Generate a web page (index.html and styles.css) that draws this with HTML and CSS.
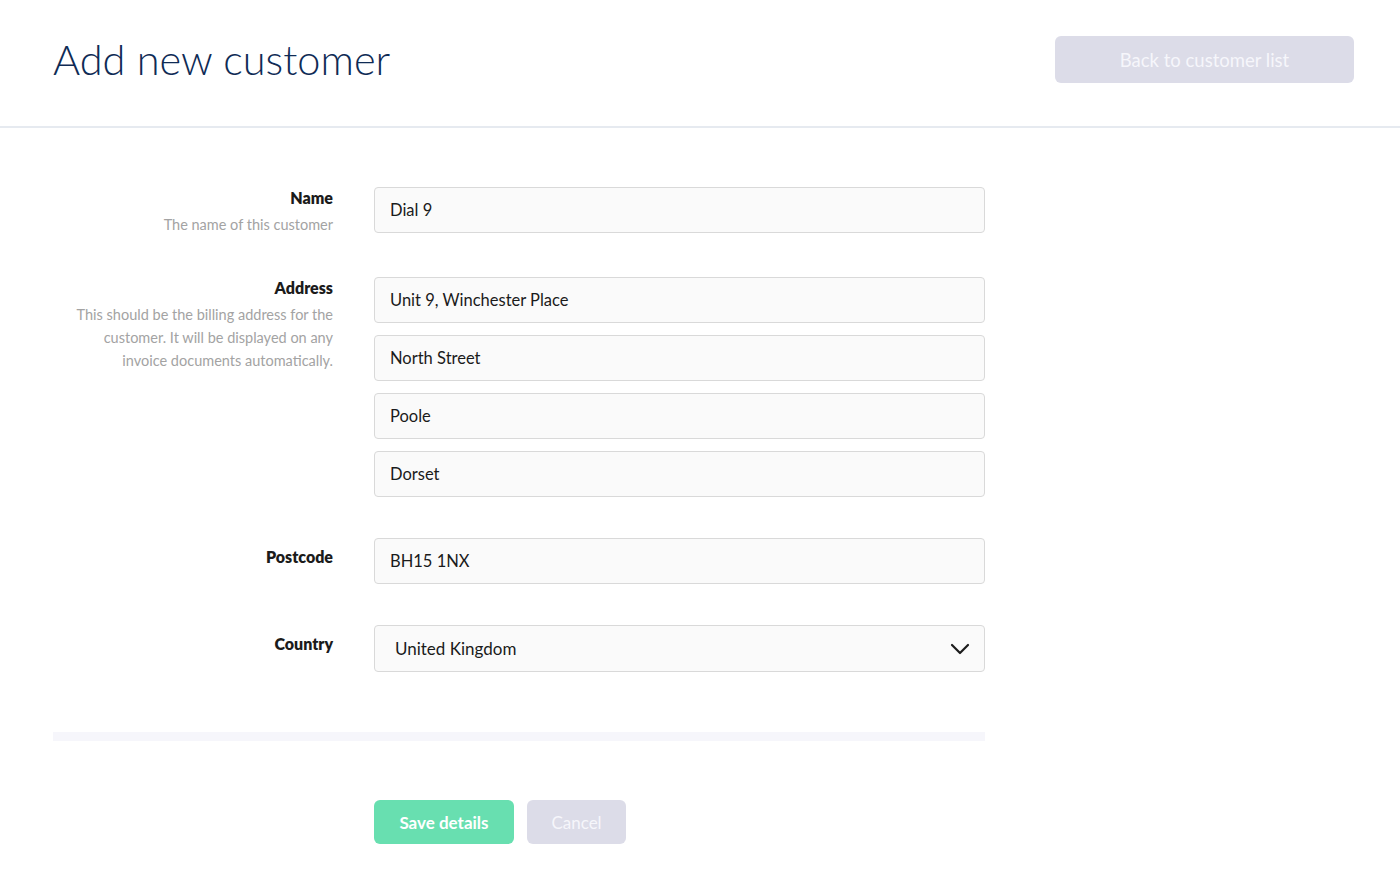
FILE: index.html
```html
<!DOCTYPE html>
<html lang="en">
<head>
<meta charset="utf-8">
<title>Add new customer</title>
<link rel="stylesheet" href="styles.css">
</head>
<body>
<header class="page-header">
  <h1 class="page-title">Add new customer</h1>
  <a class="btn btn-muted btn-back" href="#">Back to customer list</a>
</header>
<main class="content">
  <form class="form">
    <div class="row">
      <div class="label-col">
        <label class="label">Name</label>
        <p class="help">The name of this customer</p>
      </div>
      <div class="field-col">
        <input class="input" type="text" value="Dial 9">
      </div>
    </div>
    <div class="row">
      <div class="label-col">
        <label class="label">Address</label>
        <p class="help">This should be the billing address for the customer. It will be displayed on any invoice documents automatically.</p>
      </div>
      <div class="field-col">
        <input class="input" type="text" value="Unit 9, Winchester Place">
        <input class="input" type="text" value="North Street">
        <input class="input" type="text" value="Poole">
        <input class="input" type="text" value="Dorset">
      </div>
    </div>
    <div class="row">
      <div class="label-col label-col-solo">
        <label class="label">Postcode</label>
      </div>
      <div class="field-col">
        <input class="input" type="text" value="BH15 1NX">
      </div>
    </div>
    <div class="row">
      <div class="label-col label-col-solo">
        <label class="label">Country</label>
      </div>
      <div class="field-col">
        <div class="select">
          <span class="select-value">United Kingdom</span>
          <svg class="chevron" width="20" height="12" viewBox="0 0 20 12"><path d="M2 2 L10 10 L18 2" fill="none" stroke="#1b1b1b" stroke-width="2.2" stroke-linecap="round" stroke-linejoin="round"/></svg>
        </div>
      </div>
    </div>
    <div class="divider"></div>
    <div class="actions">
      <button class="btn btn-primary" type="button">Save details</button>
      <button class="btn btn-muted btn-cancel" type="button">Cancel</button>
    </div>
  </form>
</main>
</body>
</html>
```
FILE: styles.css
```css
* { box-sizing: border-box; }
html, body { margin: 0; padding: 0; background: #ffffff; }
body {
  font-family: "Lato", "Open Sans", sans-serif;
  color: #1b1b1b;
}
.page-header {
  display: flex;
  justify-content: space-between;
  align-items: flex-start;
  height: 128px;
  padding: 36px 46px 0 53px;
  border-bottom: 2px solid #e6eaf0;
}
.page-title {
  margin: -1px 0 0 0;
  font-size: 41.5px;
  line-height: 48px;
  font-weight: 300;
  color: #0f2b55;
}
.btn {
  display: inline-flex;
  align-items: center;
  justify-content: center;
  border: none;
  border-radius: 6px;
  font-family: inherit;
  text-decoration: none;
  color: #ffffff;
  cursor: pointer;
}
.btn-muted { background: #dcdce8; color: #f6f6fb; }
.btn-back {
  width: 299px;
  height: 47px;
  font-size: 18.5px;
}
.content { padding: 59px 53px 0 53px; }
.form { width: 932px; }
.row {
  display: flex;
  align-items: flex-start;
  margin-bottom: 41px;
}
.label-col {
  width: 280px;
  text-align: right;
  display: flex;
  flex-direction: column;
  align-items: flex-end;
}
.label-col-solo { padding-top: 8px; }
.label {
  display: block;
  font-size: 16px;
  font-weight: 800;
  line-height: 22px;
  color: #1b1b1b;
}
.help {
  margin: 4px 0 0 0;
  max-width: 262px;
  font-size: 14.5px;
  line-height: 23px;
  color: #a3a3a3;
}
.field-col {
  margin-left: 41px;
  width: 611px;
  display: flex;
  flex-direction: column;
  gap: 12px;
}
.input, .select {
  width: 100%;
  height: 46px;
  padding: 0 15px;
  border: 1px solid #d9d9d9;
  border-radius: 4px;
  background: #fafafa;
  font-family: inherit;
  font-size: 16.5px;
  color: #1b1b1b;
  outline: none;
}
.select {
  height: 47px;
  display: flex;
  align-items: center;
  justify-content: space-between;
  padding: 0 14px 0 20px;
}
.select-value { font-size: 17px; }
.chevron { display: block; }
.divider {
  height: 9px;
  background: #f6f6fb;
  margin-top: 60px;
}
.actions {
  display: flex;
  gap: 13px;
  margin-top: 59px;
  padding-left: 321px;
}
.btn-primary {
  width: 140px;
  height: 44px;
  background: #68dfb0;
  font-size: 17px;
  font-weight: 700;
}
.btn-cancel {
  width: 99px;
  height: 44px;
  font-size: 17px;
}
```
